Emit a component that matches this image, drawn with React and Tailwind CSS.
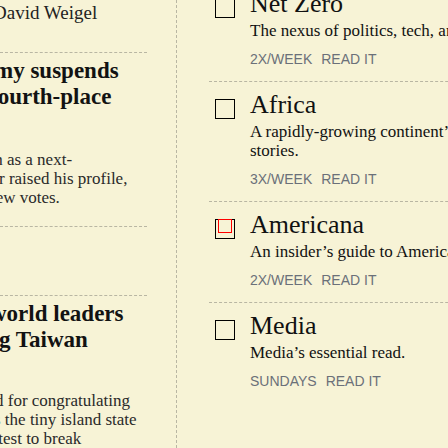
const newsletters = [
  {
    title: "Net Zero",
    blurb: "The nexus of politics, tech, and the climate.",
    freq: "2X/WEEK",
  },
  {
    title: "Africa",
    blurb: "A rapidly-growing continent’s most important stories.",
    freq: "3X/WEEK",
  },
  {
    title: "Americana",
    blurb: "An insider’s guide to American politics.",
    freq: "2X/WEEK",
    focused: true,
  },
  {
    title: "Media",
    blurb: "Media’s essential read.",
    freq: "SUNDAYS",
  },
];

function Newsletter({ item }) {
  return (
    <div className="border-t border-dashed border-[#b9b6a3] pt-[8px] pb-[12px]">
      <div className="flex">
        <div className="relative ml-[6px] mt-[9px] h-[20px] w-[20px] shrink-0 border border-black">
          {item.focused && (
            <div className="absolute left-[2px] top-[-1px] h-[14px] w-[14px] border border-[#ff0000]" />
          )}
        </div>
        <div className="ml-[15px] w-[350px]">
          <div className="text-[26px] leading-[30px] text-[#111]">{item.title}</div>
          <p className="mt-[2px] text-[17px] leading-[19px] text-[#111]">{item.blurb}</p>
          <div className="mt-[9px] flex gap-[9px] font-['Liberation_Sans',Arial,sans-serif] text-[14px] leading-[20px] text-[#6b7079]">
            <span>{item.freq}</span>
            <span>READ IT</span>
          </div>
        </div>
      </div>
    </div>
  );
}

export default function App() {
  return (
    <div className="flex h-[448px] w-[448px] overflow-hidden bg-[#f7f3d6] font-['Liberation_Serif','Times_New_Roman',serif]">
      {/* left column, clipped at the edge */}
      <div className="w-[147px] shrink-0 overflow-hidden whitespace-nowrap">
        <div className="h-[53px] border-b border-dashed border-[#b9b6a3] pt-[1px]">
          <div className="ml-[-7px] text-[19px] leading-[24px] text-[#222]">David Weigel</div>
        </div>

        <div className="h-[174px] border-b border-dashed border-[#b9b6a3] pt-[5px]">
          <div className="text-[23px] font-bold leading-[26px] text-[#121212]">
            <div className="ml-[-6px]">my suspends</div>
            <div className="ml-[-10px]">fourth-place</div>
          </div>
          <div className="mt-[40px] text-[17px] leading-[19px] text-[#2a2a2a]">
            <div className="ml-[-20px]">run as a next-</div>
            <div className="ml-[-1px]">r raised his profile,</div>
            <div className="ml-[-10px]">few votes.</div>
          </div>
        </div>

        <div className="h-[69px] border-b border-dashed border-[#b9b6a3]" />

        <div className="pt-[5px]">
          <div className="text-[23px] font-bold leading-[26px] text-[#121212]">
            <div className="ml-[-10px]">world leaders</div>
            <div className="ml-[-1px]">g Taiwan</div>
          </div>
          <div className="mt-[38px] text-[17px] leading-[19px] text-[#2a2a2a]">
            <div className="ml-[-5px]">d for congratulating</div>
            <div className="ml-[-6px]">s the tiny island state</div>
            <div className="ml-[-14px]">latest to break</div>
          </div>
        </div>
      </div>

      <div className="ml-[29px] border-l border-dashed border-[#b9b6a3]" />

      {/* newsletter list */}
      <div className="ml-[32px] mt-[-20px] w-[400px] shrink-0">
        {newsletters.map((item) => (
          <Newsletter key={item.title} item={item} />
        ))}
      </div>
    </div>
  );
}
